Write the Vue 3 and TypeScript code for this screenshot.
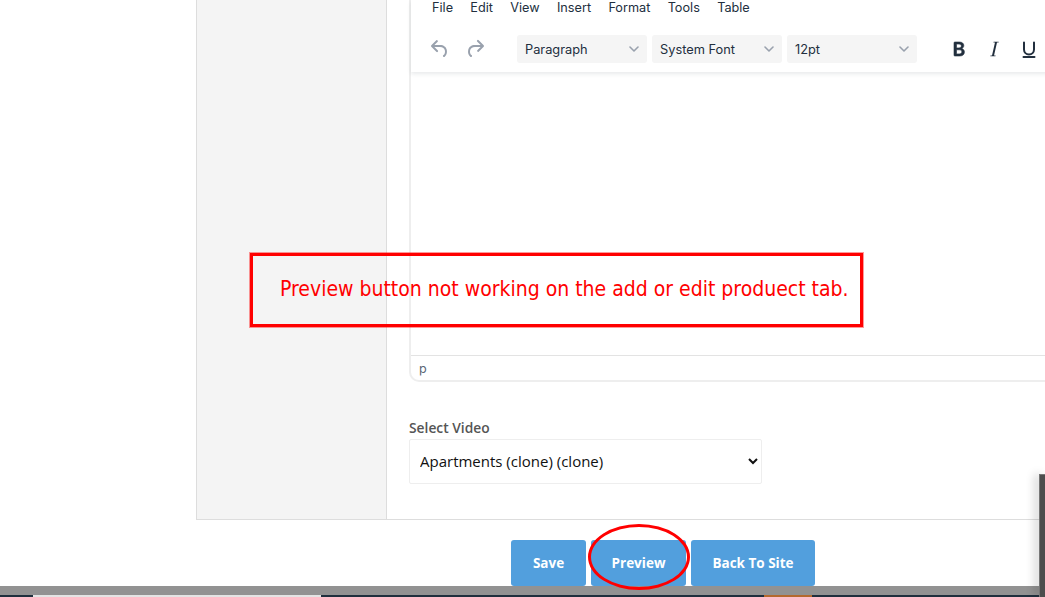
<script setup lang="ts">
const menus: string[] = ['File', 'Edit', 'View', 'Insert', 'Format', 'Tools', 'Table']
const selects = [
  { label: 'Paragraph', cls: 'w-a' },
  { label: 'System Font', cls: 'w-b' },
  { label: '12pt', cls: 'w-c' },
]
const buttons = [
  { label: 'Save', cls: 'btn-save' },
  { label: 'Preview', cls: 'btn-preview' },
  { label: 'Back To Site', cls: 'btn-back' },
]
</script>

<template>
  <div class="page">
    <div class="top">
      <div class="side"></div>
      <div class="main">
        <div class="editor">
          <div class="toolbar">
            <div class="menubar">
              <span v-for="m in menus" :key="m">{{ m }}</span>
            </div>
            <div class="tools">
              <svg class="hist" width="24" height="24" viewBox="0 0 24 24">
                <path d="M6.4 8H12c3.7 0 6.2 2 6.8 5.1.6 2.7-.4 5.6-2.3 6.8a1 1 0 0 1-1-1.8c1.1-.6 1.8-2.7 1.4-4.6-.5-2.1-2.1-3.5-4.9-3.5H6.4l3.3 3.3a1 1 0 1 1-1.4 1.4l-5-5a1 1 0 0 1 0-1.4l5-5a1 1 0 0 1 1.4 1.4L6.4 8Z" fill="#99a1ad" />
              </svg>
              <svg class="hist" width="24" height="24" viewBox="0 0 24 24">
                <path d="M17.6 10H12c-2.8 0-4.4 1.4-4.9 3.5-.4 2 .3 4 1.4 4.6a1 1 0 1 1-1 1.8c-2-1.2-2.9-4.1-2.3-6.8C5.8 10 8.3 8 12 8h5.6l-3.3-3.3a1 1 0 1 1 1.4-1.4l5 5a1 1 0 0 1 0 1.4l-5 5a1 1 0 0 1-1.4-1.4l3.3-3.3Z" fill="#99a1ad" />
              </svg>
              <div class="selects">
                <div v-for="s in selects" :key="s.label" class="tsel" :class="s.cls">
                  <span>{{ s.label }}</span>
                  <svg width="10" height="6" viewBox="0 0 10 6"><path d="M1 1l4 4 4-4" fill="none" stroke="#99a1ad" stroke-width="1.6" stroke-linecap="round" stroke-linejoin="round" /></svg>
                </div>
              </div>
              <div class="fmt">
                <svg width="24" height="24" viewBox="0 0 24 24"><path d="M7.800 19c-.5 0-.8-.3-.8-.8V5.800c0-.5.3-.8.8-.8h4.600c2.700 0 4.400 1.400 4.400 3.600 0 1.500-.9 2.600-2.200 3 1.700.3 2.800 1.600 2.800 3.400 0 2.500-1.800 4-4.800 4H7.800Zm1.700-8.100h2.400c1.600 0 2.400-.6 2.400-1.900 0-1.200-.8-1.900-2.300-1.900H9.500v3.800Zm0 6h2.700c1.800 0 2.600-.7 2.600-2.100s-.9-2-2.700-2H9.500v4.100Z" fill="#222f3e" stroke="#222f3e" stroke-width=".6" /></svg>
                <svg width="24" height="24" viewBox="0 0 24 24"><path d="M16.700 4.700l-.1.900h-1.600L12 18.400h1.600l-.1.900H8.300l.2-.9h1.500l3-12.800h-1.600l.2-.9h5.100Z" fill="#222f3e" /></svg>
                <svg width="24" height="24" viewBox="0 0 24 24"><path d="M7 5.500v7a5 5 0 0 0 10 0v-7M6.500 20h11" fill="none" stroke="#222f3e" stroke-width="2" stroke-linecap="round" /></svg>
              </div>
            </div>
          </div>
          <div class="canvas"></div>
          <div class="status">p</div>
        </div>
        <div class="video">
          <label class="vlabel" for="video-select">Select Video</label>
          <select id="video-select" class="vselect">
            <option>Apartments (clone) (clone)</option>
          </select>
        </div>
      </div>
    </div>

    <div class="actions">
      <a v-for="b in buttons" :key="b.label" class="btn" :class="b.cls">{{ b.label }}</a>
    </div>

    <div class="taskbar">
      <div class="gray"></div>
      <div class="bottomline">
        <i class="seg s1"></i><i class="seg s2"></i><i class="seg s3"></i><i class="seg s4"></i><i class="seg s5"></i>
      </div>
    </div>

    <div class="note">Preview button not working on the add or edit produect tab.</div>
    <div class="ring"></div>
    <div class="drawer"></div>
  </div>
</template>

<style>
html, body { margin: 0; background: #fff; overflow: hidden; }
</style>

<style scoped>
.page {
  position: relative;
  width: 1045px;
  height: 597px;
  overflow: hidden;
  background: #fff;
  font-family: "Open Sans", sans-serif;
}
.top {
  display: flex;
  height: 520px;
  margin-left: 196px;
  border-left: 1px solid #ddd;
  border-bottom: 1px solid #ddd;
  box-sizing: border-box;
}
.side {
  width: 189px;
  flex: none;
  background: #f4f4f4;
  border-right: 1px solid #ddd;
}
.main {
  flex: 1;
  min-width: 0;
  padding-left: 22px;
}
.editor {
  height: 382px;
  width: 700px;
  box-sizing: border-box;
  border: 2px solid #eee;
  border-top: 0;
  border-right: 0;
  border-bottom-left-radius: 10px;
  display: flex;
  flex-direction: column;
  font-family: Inter, sans-serif;
  color: #222f3e;
}
.toolbar {
  height: 72px;
  flex: none;
  box-shadow: 0 2px 4px rgba(34, 47, 62, 0.1);
}
.menubar {
  display: flex;
  height: 15px;
  padding-left: 21px;
  gap: 17.300px;
  font-size: 12.700px;
  line-height: 15px;
}
.tools {
  display: flex;
  align-items: center;
  margin-top: 20px;
  height: 28px;
  padding-left: 17px;
}
.hist { margin-right: 11px; }
.selects { display: flex; gap: 5px; margin-left: 19px; }
.tsel {
  height: 28px;
  box-sizing: border-box;
  background: #f5f5f5;
  border-radius: 3px;
  display: flex;
  align-items: center;
  justify-content: space-between;
  padding: 0 8px 0 8px;
  font-size: 12.800px;
}
.w-a { width: 130px; }
.w-b { width: 130px; }
.w-c { width: 130px; }
.fmt { display: flex; gap: 11px; margin-left: 30px; }
.canvas { flex: 1; }
.status {
  height: 25px;
  flex: none;
  box-sizing: border-box;
  border-top: 1px solid #e3e3e3;
  padding-left: 8px;
  font-size: 12.600px;
  line-height: 25px;
  color: #5a6675;
}
.video { padding: 36px 0 0 0; }
.vlabel {
  display: block;
  font-size: 13.800px;
  font-weight: 600;
  line-height: 19px;
  color: #555;
}
.vselect {
  display: block;
  width: 353px;
  height: 45px;
  margin-top: 2px;
  padding: 0 6px 2px;
  box-sizing: border-box;
  border: 1px solid #eee;
  border-radius: 2px;
  background: #fff;
  font-family: "Open Sans", sans-serif;
  font-size: 15px;
  color: #111;
}
.actions {
  display: flex;
  gap: 5px;
  margin: 20px 0 0 511px;
}
.btn {
  height: 46px;
  line-height: 46px;
  text-align: center;
  box-sizing: border-box;
  background: #529fdd;
  border-radius: 3px;
  color: #fff;
  font-size: 13.500px;
  font-weight: 700;
}
.btn-save { width: 75px; }
.btn-preview { width: 95px; }
.btn-back { width: 124px; }
.taskbar {
  position: absolute;
  left: 0;
  right: 0;
  bottom: 0;
}
.gray { height: 9px; background: #929292; }
.bottomline { display: flex; height: 2px; background: #1f2f3d; }
.seg { display: block; height: 2px; }
.s1 { width: 33px; background: #1f2f3d; }
.s2 { width: 288px; background: #e4e4e4; }
.s3 { width: 443px; background: #1f2f3d; }
.s4 { width: 48px; background: #b5692e; }
.s5 { flex: 1; background: #1f2f3d; }
.note {
  position: absolute;
  left: 250px;
  top: 253px;
  width: 613px;
  height: 74px;
  box-sizing: border-box;
  border: 3px solid #f00;
  outline: 1px solid rgba(255, 0, 0, 0.4);
  padding-left: 27px;
  font-family: "DejaVu Sans Condensed", "DejaVu Sans", sans-serif;
  font-stretch: condensed;
  font-size: 21px;
  line-height: 66px;
  color: #f00;
  white-space: nowrap;
}
.ring {
  position: absolute;
  left: 588px;
  top: 524px;
  width: 102px;
  height: 66px;
  box-sizing: border-box;
  border: 3px solid #f00;
  border-radius: 50%;
}
.drawer {
  position: absolute;
  right: 0;
  top: 474px;
  width: 6px;
  height: 123px;
  background: #4d4d4d;
  border-left: 1px solid #777;
  border-top: 1px solid #777;
  box-sizing: border-box;
  box-shadow: -4px 0 10px rgba(0, 0, 0, 0.2);
}
</style>
